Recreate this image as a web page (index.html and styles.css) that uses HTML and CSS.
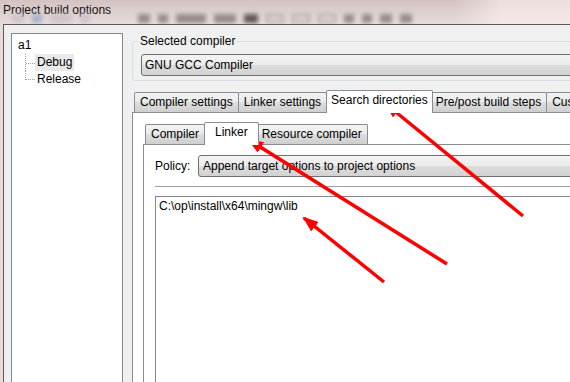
FILE: index.html
```html
<!DOCTYPE html>
<html lang="en">
<head>
    <meta charset="UTF-8">
    <meta name="viewport" content="width=device-width, initial-scale=1.0">
    <title>Project build options</title>
    <link rel="stylesheet" href="styles.css">
</head>
<body>

    <div class="window">

        <div class="titlebar">
            <div class="ghost-bar">
                <span class="ghost light" style="width:12px"></span>
                <span class="ghost blue" style="width:10px"></span>
                <span class="ghost light" style="width:22px"></span>
                <span class="ghost light gap" style="width:10px"></span>
                <span class="ghost" style="width:12px"></span>
                <span class="ghost" style="width:10px"></span>
                <span class="ghost" style="width:30px"></span>
                <span class="ghost" style="width:22px"></span>
                <span class="ghost dark" style="width:14px"></span>
                <span class="ghost outline" style="width:14px"></span>
                <span class="ghost outline" style="width:14px"></span>
                <span class="ghost outline" style="width:14px"></span>
                <span class="ghost" style="width:10px"></span>
                <span class="ghost" style="width:10px"></span>
                <span class="ghost" style="width:12px"></span>
                <span class="ghost" style="width:12px"></span>
            </div>
            <div class="title">Project build options</div>
        </div>

        <div class="frame">
            <div class="client">

                <div class="tree">
                    <div class="row">a1</div>
                    <div class="children">
                        <div class="row child">
                            <div class="conn full"><div class="tick"></div></div>
                            <span class="label selected">Debug</span>
                        </div>
                        <div class="row child">
                            <div class="conn last"></div>
                            <span class="label">Release</span>
                        </div>
                    </div>
                </div>

                <div class="main">
                    <fieldset class="group">
                        <legend>Selected compiler</legend>
                        <div class="combo">GNU GCC Compiler</div>
                    </fieldset>

                    <div class="tabs outer-tabs">
                        <div class="tab">Compiler settings</div>
                        <div class="tab">Linker settings</div>
                        <div class="tab active">Search directories</div>
                        <div class="tab">Pre/post build steps</div>
                        <div class="tab">Custom variables</div>
                    </div>

                    <div class="panel outer-panel">
                        <div class="tabs inner-tabs">
                            <div class="tab">Compiler</div>
                            <div class="tab active">Linker</div>
                            <div class="tab">Resource compiler</div>
                        </div>

                        <div class="panel inner-panel">
                            <div class="policy">
                                <span class="policy-label">Policy:</span>
                                <div class="combo">Append target options to project options</div>
                            </div>
                            <div class="sep"></div>
                            <div class="listbox">
                                <div class="item">C:\op\install\x64\mingw\lib</div>
                            </div>
                        </div>
                    </div>
                </div>

            </div>
        </div>

        <svg class="arrows" width="570" height="382" viewBox="0 0 570 382">
            <defs>
                <marker id="head" markerUnits="userSpaceOnUse" markerWidth="16" markerHeight="12" refX="14" refY="6" orient="auto">
                    <path d="M0,0 L16,6 L0,12 Z" fill="#ff0000"/>
                </marker>
            </defs>
            <line x1="523" y1="216" x2="386" y2="104" stroke="#ff0000" stroke-width="3.5" marker-end="url(#head)"/>
            <line x1="447" y1="264" x2="249" y2="140" stroke="#ff0000" stroke-width="3.5" marker-end="url(#head)"/>
            <line x1="384" y1="282" x2="304" y2="218" stroke="#ff0000" stroke-width="3.5" marker-end="url(#head)"/>
        </svg>

    </div>

</body>
</html>
```

FILE: styles.css
```css
body {
    margin: 0;
    padding: 0;
    font-family: "Liberation Sans", Arial, sans-serif;
    font-size: 12px;
    color: #000;
    background-color: #e8dcdb;
    overflow: hidden;
}
.window {
    position: relative;
    width: 570px;
    height: 382px;
    overflow: hidden;
}

/* title bar (aero glass) */
.titlebar {
    display: grid;
    height: 24px;
    overflow: hidden;
    background: linear-gradient(90deg, rgba(255,255,255,0) 80%, rgba(255,240,238,0.6) 88%),
                linear-gradient(#d3c2c1, #dccfce 45%, #e6dcdb);
}
.titlebar > div {
    grid-area: 1 / 1;
}
.title {
    padding: 3px 0 0 3px;
    line-height: 14px;
    color: #141414;
}
.ghost-bar {
    display: flex;
    align-items: flex-end;
    gap: 8px;
    padding: 0 0 1px 12px;
    filter: blur(2.2px);
}
.ghost {
    display: block;
    height: 9px;
    background-color: #978c8c;
}
.ghost.light {
    background-color: #cfc6c9;
}
.ghost.blue {
    background-color: #a7b0cb;
}
.ghost.gap {
    margin-right: 40px;
}
.ghost.dark {
    background-color: #615959;
}
.ghost.outline {
    background-color: transparent;
    border: 2px solid #aea3a3;
    height: 5px;
}

/* window body */
.frame {
    padding-left: 3px;
    height: 358px;
}
.client {
    display: flex;
    height: 100%;
    box-sizing: border-box;
    border-left: 1px solid #5f5a5a;
    border-top: 1px solid #5f5a5a;
    background-color: #f0f0f0;
    padding: 8px 0 0 7px;
}

/* tree */
.tree {
    flex: 0 0 112px;
    box-sizing: border-box;
    border: 1px solid #828790;
    border-bottom: none;
    background-color: #fff;
    padding: 3px 0 0 6px;
}
.row {
    height: 17px;
    line-height: 17px;
}
.children {
    padding-left: 7px;
}
.child {
    display: flex;
}
.conn {
    width: 10px;
    box-sizing: border-box;
    border-left: 1px dotted #a0a0a0;
}
.conn.full {
    height: 17px;
}
.tick {
    height: 9px;
    border-bottom: 1px dotted #a0a0a0;
}
.conn.last {
    height: 9px;
    border-bottom: 1px dotted #a0a0a0;
}
.label {
    padding: 0 2px;
}
.label.selected {
    background-color: #e9e9e9;
}

/* right side */
.main {
    flex: 0 0 640px;
    margin-left: 9px;
}
.group {
    margin: 1px 0 0 0;
    padding: 6px 0 4px 8px;
    border: 1px solid #d5dfe5;
    border-radius: 3px;
}
.group legend {
    padding: 0 2px;
    margin-left: -3px;
    line-height: 14px;
}
.combo {
    height: 22px;
    box-sizing: border-box;
    border: 1px solid #707070;
    border-radius: 3px;
    padding-left: 3px;
    line-height: 20px;
    background: linear-gradient(#f3f3f3, #ebebeb 50%, #dddddd 50%, #d2d2d2);
    white-space: nowrap;
}

/* tabs */
.tabs {
    display: flex;
    align-items: flex-end;
    padding-left: 2px;
    height: 22px;
}
.outer-tabs {
    margin-top: 9px;
}
.tab {
    height: 20px;
    box-sizing: border-box;
    border: 1px solid #898c95;
    border-bottom: none;
    border-radius: 2px 2px 0 0;
    margin-left: -1px;
    padding: 0 5px;
    line-height: 19px;
    white-space: nowrap;
    background: linear-gradient(#f3f3f3, #ebebeb 50%, #dddddd 50%, #cfcfcf);
}
.tab:first-child {
    margin-left: 0;
}
.tab.active {
    position: relative;
    z-index: 1;
    height: 23px;
    margin-bottom: -1px;
    line-height: 19px;
    background: #fff;
}
.outer-tabs .tab.active {
    padding: 0 4px;
    margin-right: -2px;
}
.inner-tabs .tab.active {
    padding: 0 10px;
    margin: 0 -2px -1px -1px;
}
.panel {
    border: 1px solid #898c95;
    background-color: #fff;
}
.outer-panel {
    border-right: none;
    border-bottom: none;
    height: 300px;
    padding: 9px 0 0 10px;
}
.inner-panel {
    border-right: none;
    border-bottom: none;
    height: 260px;
    padding: 10px 0 0 11px;
}
.policy {
    display: flex;
    align-items: center;
}
.policy-label {
    width: 43px;
}
.policy .combo {
    flex: 1;
    padding-left: 4px;
}
.sep {
    height: 1px;
    margin-top: 9px;
    background-color: #a0a0a0;
    border-bottom: 1px solid #fff;
}
.listbox {
    margin-top: 8px;
    height: 200px;
    border: 1px solid #828790;
    border-right: none;
    padding: 2px 3px;
}
.item {
    line-height: 15px;
}

.arrows {
    position: absolute;
    left: 0;
    top: 0;
    pointer-events: none;
}
```
